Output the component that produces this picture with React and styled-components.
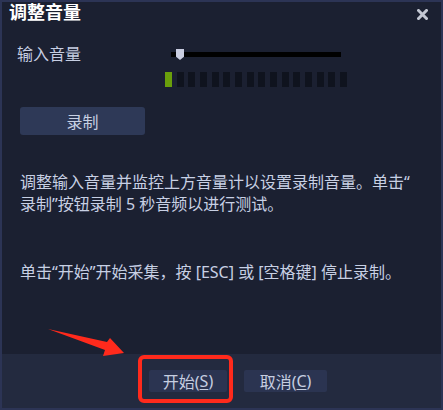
import styled, { createGlobalStyle } from "styled-components";

const GlobalStyle = createGlobalStyle`
  html, body {
    margin: 0;
    padding: 0;
    background: #1b2031;
  }
  body {
    font-family: "Noto Sans", "Noto Sans CJK SC", sans-serif;
  }
`;

const Window = styled.div`
  position: relative;
  box-sizing: border-box;
  width: 443px;
  height: 410px;
  border: 2px solid #2c3455;
  background: #1b2031;
  display: flex;
  flex-direction: column;
  color: #c8d0e3;
`;

const TitleBar = styled.div`
  height: 24px;
  display: flex;
  align-items: flex-start;
  justify-content: space-between;
  padding: 0 13px 0 7px;
`;

const Title = styled.div`
  font-size: 18px;
  line-height: 21px;
  font-weight: bold;
  color: #ffffff;
`;

const CloseButton = styled.div`
  width: 11px;
  height: 11px;
  margin-top: 7px;
  display: flex;
`;

const Body = styled.div`
  flex: 1;
  padding: 0 0 0 18px;
  display: flex;
  flex-direction: column;
  align-items: flex-start;
`;

const VolumeRow = styled.div`
  margin-top: 18px;
  display: grid;
  grid-template-columns: 151px 170px;
  align-items: start;
  height: 20px;
`;

const Label = styled.div`
  margin-left: -3px;
  font-size: 16px;
  line-height: 20px;
  color: #c6cee2;
`;

const Slider = styled.div`
  position: relative;
  height: 20px;
`;

const Track = styled.div`
  margin-top: 8px;
  height: 5px;
  background: #000000;
`;

const Thumb = styled.div`
  position: absolute;
  left: 5px;
  top: 5px;
  width: 8px;
  height: 11px;
  background: #c9cde0;
  clip-path: polygon(0 0, 100% 0, 100% 70%, 50% 100%, 0 70%);
`;

const Meter = styled.div`
  margin: 8px 0 0 145px;
  width: 182px;
  height: 15px;
  display: flex;
  justify-content: space-between;
`;

const MeterBar = styled.div`
  width: 7px;
  height: 100%;
  background: ${(p) => (p.$lit ? "#6a9f0b" : "#0f131e")};
`;

const RecordButton = styled.div`
  margin-top: 20px;
  width: 125px;
  height: 28px;
  border-radius: 3px;
  background: #2e3957;
  display: flex;
  align-items: center;
  justify-content: center;
  font-size: 16px;
  color: #c8d0e3;
`;

const Paragraph = styled.p`
  margin: ${(p) => p.$top}px 0 0 0;
  font-size: 16px;
  line-height: 22px;
  white-space: nowrap;
  color: #c8d0e4;
`;

const Footer = styled.div`
  height: 54px;
  background: #232a3f;
  display: flex;
  align-items: flex-start;
  gap: 17px;
  padding: 16px 0 0 147px;
  box-sizing: border-box;
`;

const FooterButton = styled.div`
  width: ${(p) => p.$width}px;
  height: 22px;
  background: #2b3451;
  border-radius: 2px;
  display: flex;
  align-items: center;
  justify-content: center;
  font-size: 16px;
  color: #c6cee0;
`;

const Key = styled.u`
  text-decoration-thickness: 1px;
  text-underline-offset: 2px;
`;

const Annotation = styled.svg`
  position: absolute;
  left: -2px;
  top: -2px;
  width: 443px;
  height: 410px;
  pointer-events: none;
`;

export default function App() {
  return (
    <>
      <GlobalStyle />
      <Window>
        <TitleBar>
          <Title>调整音量</Title>
          <CloseButton>
            <svg width="11" height="11" viewBox="0 0 11 11">
              <path
                d="M1.5 1.5 L9.5 9.5 M9.5 1.5 L1.5 9.5"
                stroke="#c3c7d3"
                strokeWidth="3"
                strokeLinecap="square"
              />
            </svg>
          </CloseButton>
        </TitleBar>
        <Body>
          <VolumeRow>
            <Label>输入音量</Label>
            <Slider>
              <Track />
              <Thumb />
            </Slider>
          </VolumeRow>
          <Meter>
            {Array.from({ length: 16 }).map((_, i) => (
              <MeterBar key={i} $lit={i === 0} />
            ))}
          </Meter>
          <RecordButton>录制</RecordButton>
          <Paragraph $top={36}>
            调整输入音量并监控上方音量计以设置录制音量。单击“
            <br />
            录制”按钮录制 5 秒音频以进行测试。
          </Paragraph>
          <Paragraph $top={46}>
            单击“开始”开始采集，按 [ESC] 或 [空格键] 停止录制。
          </Paragraph>
        </Body>
        <Footer>
          <FooterButton $width={78}>
            开始(<Key>S</Key>)
          </FooterButton>
          <FooterButton $width={83}>
            取消(<Key>C</Key>)
          </FooterButton>
        </Footer>
        <Annotation viewBox="0 0 443 410">
          <rect
            x="140"
            y="357"
            width="91"
            height="44"
            rx="4"
            fill="none"
            stroke="#ff2a1c"
            strokeWidth="4"
          />
          <polygon
            points="48,329 107,342 110,338 124,353 103,356 105,350"
            fill="#ff2a1c"
          />
        </Annotation>
      </Window>
    </>
  );
}
